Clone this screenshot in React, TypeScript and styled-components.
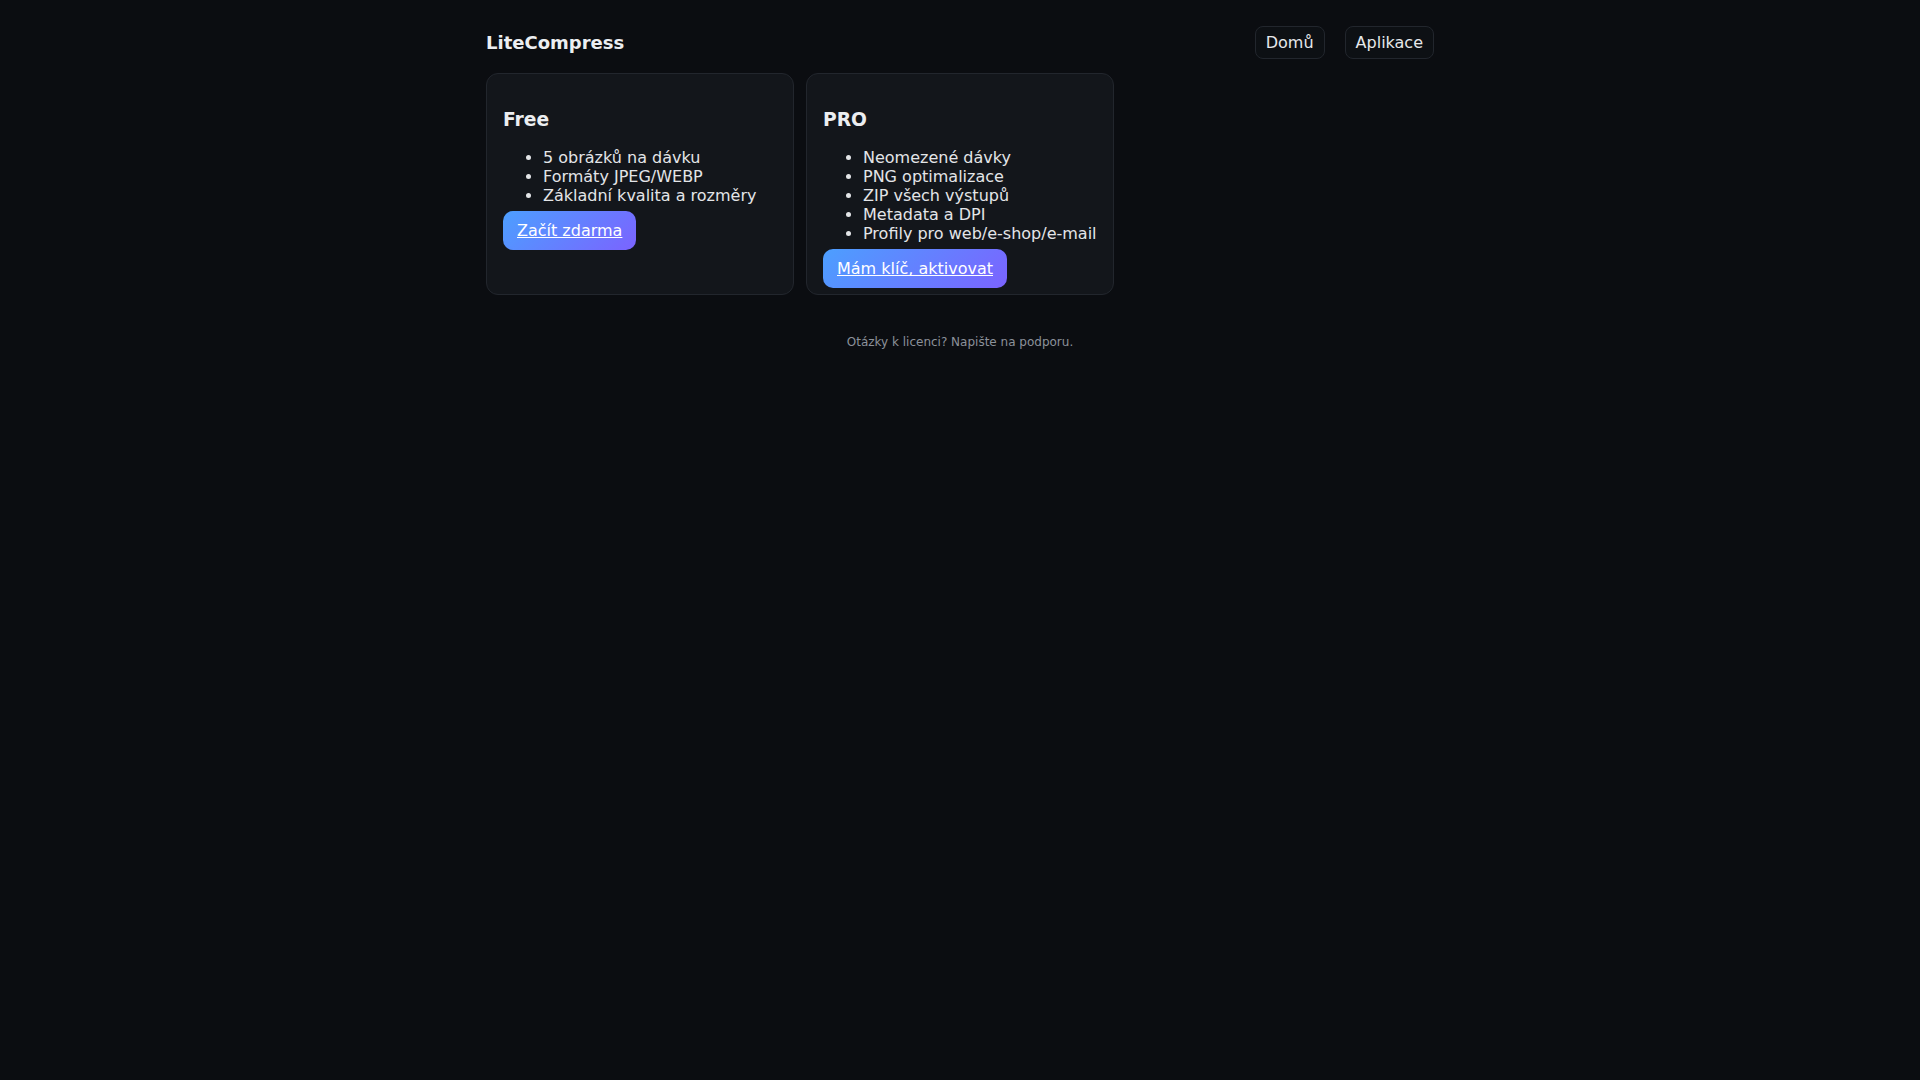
import React from 'react';
import styled, { createGlobalStyle } from 'styled-components';

const GlobalStyle = createGlobalStyle`
  html, body {
    margin: 0;
    padding: 0;
    background: #0b0d11;
    color: #e6e8eb;
    font-family: 'DejaVu Sans', 'Noto Sans', sans-serif;
  }
`;

type Plan = {
  name: string;
  features: string[];
  cta: string;
};

const plans: Plan[] = [
  {
    name: 'Free',
    features: ['5 obrázků na dávku', 'Formáty JPEG/WEBP', 'Základní kvalita a rozměry'],
    cta: 'Začít zdarma',
  },
  {
    name: 'PRO',
    features: [
      'Neomezené dávky',
      'PNG optimalizace',
      'ZIP všech výstupů',
      'Metadata a DPI',
      'Profily pro web/e-shop/e-mail',
    ],
    cta: 'Mám klíč, aktivovat',
  },
];

function App() {
  return (
    <>
      <GlobalStyle />
      <Page>
        <Header>
          <Brand>LiteCompress</Brand>
          <Nav>
            <NavLink href='#'>Domů</NavLink>
            <NavLink href='#'>Aplikace</NavLink>
          </Nav>
        </Header>

        <Plans>
          {plans.map((plan) => (
            <Card key={plan.name}>
              <PlanTitle>{plan.name}</PlanTitle>
              <Features>
                {plan.features.map((f) => (
                  <li key={f}>{f}</li>
                ))}
              </Features>
              <CtaButton href='#'>{plan.cta}</CtaButton>
            </Card>
          ))}
        </Plans>

        <Footer>Otázky k licenci? Napište na podporu.</Footer>
      </Page>
    </>
  );
}

export default App;

const Page = styled.div`
  width: 948px;
  margin: 0 auto;
`;

const Header = styled.header`
  display: flex;
  align-items: center;
  justify-content: space-between;
  padding: 26px 0 14px;
`;

const Brand = styled.div`
  font-size: 18px;
  font-weight: 700;
  color: #eceef1;
`;

const Nav = styled.nav`
  display: flex;
  gap: 20px;
`;

const NavLink = styled.a`
  display: inline-block;
  padding: 6px 10px;
  border: 1px solid #22262d;
  border-radius: 8px;
  background: #0d1014;
  color: #e6e8eb;
  font-size: 16px;
  text-decoration: none;
`;

const Plans = styled.div`
  display: grid;
  grid-template-columns: repeat(auto-fill, minmax(300px, 1fr));
  gap: 12px;
`;

const Card = styled.section`
  background: #13161b;
  border: 1px solid #22262d;
  border-radius: 12px;
  padding: 16px 16px 6px;
`;

const PlanTitle = styled.h3`
  font-size: 18.72px;
  font-weight: 700;
  margin: 18.72px 0;
  color: #eceef1;
`;

const Features = styled.ul`
  margin: 0 0 6px;
  padding-left: 40px;
  font-size: 16px;
  color: #e3e5e8;
`;

const CtaButton = styled.a`
  display: inline-block;
  padding: 10px 14px;
  border-radius: 10px;
  background: linear-gradient(135deg, #4c9fff 0%, #7b63ff 100%);
  color: #ffffff;
  font-size: 16px;
  text-decoration: underline;
`;

const Footer = styled.footer`
  margin-top: 40px;
  text-align: center;
  font-size: 12px;
  color: #8b919a;
`;
